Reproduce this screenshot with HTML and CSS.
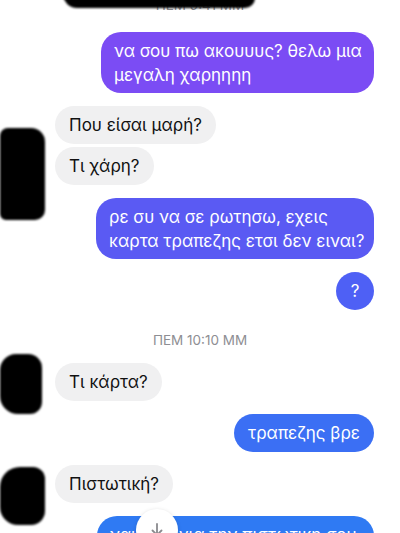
FILE: index.html
```html
<!DOCTYPE html>
<html lang="el">
<head>
    <meta charset="UTF-8">
    <meta name="viewport" content="width=device-width, initial-scale=1.0">
    <title>Συνομιλία</title>
    <link rel="stylesheet" href="styles.css">
</head>
<body>
    <div class="chat">
        <div class="stamp stamp-top">ΠΕΜ 9:41 ΜΜ</div>
        <div class="scribble scribble-top"></div>

        <div class="row out first">
            <div class="bubble multi c1">να σου πω ακουυυς? θελω μια<br>μεγαλη χαρηηηη</div>
        </div>

        <div class="row in group">
            <div class="scribble avatar-a"></div>
            <div class="bubble">Που είσαι μαρή?</div>
            <div class="bubble">Τι χάρη?</div>
        </div>

        <div class="row out">
            <div class="bubble multi c2">ρε συ να σε ρωτησω, εχεις<br>καρτα τραπεζης ετσι δεν ειναι?</div>
        </div>

        <div class="row out">
            <div class="bubble round c3">?</div>
        </div>

        <div class="stamp">ΠΕΜ 10:10 ΜΜ</div>

        <div class="row in group after-stamp">
            <div class="scribble avatar-b"></div>
            <div class="bubble">Τι κάρτα?</div>
        </div>

        <div class="row out">
            <div class="bubble c4">τραπεζης βρε</div>
        </div>

        <div class="row in group">
            <div class="scribble avatar-c"></div>
            <div class="bubble">Πιστωτική?</div>
        </div>

        <div class="row out last">
            <div class="bubble multi c5">ναι λεω για την πιστωτικη σου<br>μπορεις να μου τη δανεισεις</div>
            <div class="scroll-down">
                <svg width="16" height="16" viewBox="0 0 16 16">
                    <path d="M8 2v11M3.5 8.5L8 13l4.5-4.5" fill="none" stroke="#8a8a8e" stroke-width="1.8" stroke-linecap="round" stroke-linejoin="round"/>
                </svg>
            </div>
        </div>
    </div>
</body>
</html>
```

FILE: styles.css
```css
body {
    margin: 0;
    background: #fff;
    font-family: Inter, "Noto Sans", sans-serif;
    height: 533px;
    overflow: hidden;
}
.chat {
    position: relative;
    display: flex;
    flex-direction: column;
    padding: 0 26px 0 55px;
}
.stamp {
    text-align: center;
    font-size: 13.5px;
    line-height: 16px;
    color: #8e8e93;
    margin-top: 22px;
    margin-left: -29px;
}
.stamp-top {
    margin-top: -3px;
}
.scribble {
    position: absolute;
    background: #000;
    filter: blur(1.2px);
}
.scribble-top {
    left: 63px;
    top: -10px;
    width: 192px;
    height: 18px;
    border-radius: 4px 6px 10px 14px;
}
.row {
    position: relative;
    display: flex;
    margin-top: 13px;
}
.row.first {
    margin-top: 19px;
}
.row.out {
    justify-content: flex-end;
}
.row.in {
    flex-direction: column;
    align-items: flex-start;
    gap: 3px;
}
.row.after-stamp {
    margin-top: 15px;
}
.row.last {
    margin-top: 13px;
}
.bubble {
    font-size: 17px;
    line-height: 24px;
    padding: 7px 14px;
    border-radius: 19px;
    background: #f0f0f1;
    color: #111;
    white-space: nowrap;
}
.out .bubble {
    color: #fff;
}
.bubble.multi {
    padding: 6.5px 14px 6.5px 13px;
    border-radius: 20px;
}
.bubble.round {
    width: 38px;
    padding: 7px 0;
    text-align: center;
    box-sizing: border-box;
}
.c1 { background: #7b4cf4; width: 246px; }
.c2 { background: #5a5af3; width: 251px; }
.c3 { background: #4e60f5; }
.c4 { background: #3b6ff4; }
.c5 { background: #2f7af3; width: 250px; padding-top: 9px; }
.avatar-a {
    left: -55px;
    top: 22px;
    width: 45px;
    height: 92px;
    border-radius: 8px 14px 10px 6px;
}
.avatar-b {
    left: -55px;
    top: -9px;
    width: 42px;
    height: 60px;
    border-radius: 16px 14px 12px 18px;
}
.avatar-c {
    left: -55px;
    top: 2px;
    width: 45px;
    height: 58px;
    border-radius: 20px 12px 14px 18px;
}
.scroll-down {
    position: absolute;
    left: 81px;
    top: -7px;
    width: 42px;
    height: 42px;
    border-radius: 50%;
    background: #fff;
    box-shadow: 0 1px 4px rgba(0, 0, 0, 0.15);
    display: flex;
    align-items: center;
    justify-content: center;
}
```
